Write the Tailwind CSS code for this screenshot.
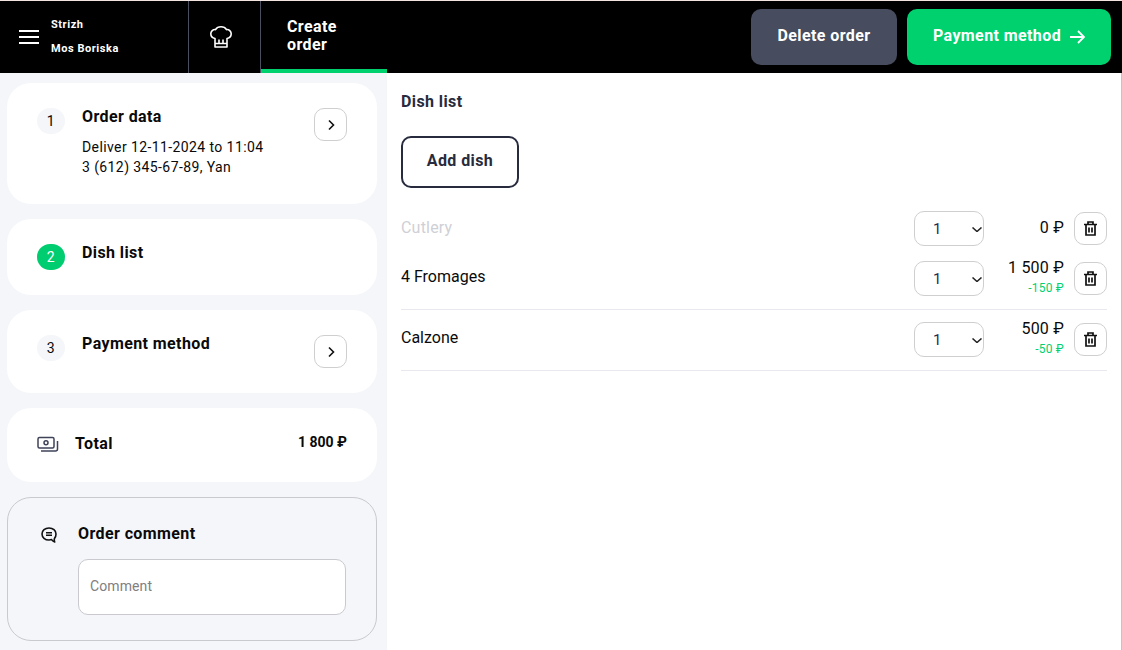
<!DOCTYPE html>
<html lang="en">
<head>
    <meta charset="UTF-8">
    <title>Create order</title>
    <script src="https://cdn.jsdelivr.net/npm/@tailwindcss/browser@4"></script>
</head>
<body class="h-[650px] overflow-hidden bg-white font-['Roboto',sans-serif] tracking-[0.4px] text-[#0a0a0a]">
    <div class="h-px bg-[#f3e4e0]"></div>
    <header class="flex h-[72px] items-stretch bg-black text-white">
        <div class="flex w-[189px] items-center border-r border-[#4a4e5e]">
            <svg class="ml-[19px] h-[16px] w-[20px]" viewBox="0 0 20 16" fill="none" stroke="white" stroke-width="2"><path d="M0 2h20M0 8h20M0 14h20"/></svg>
            <div class="ml-3 flex flex-col gap-[10px] text-[11px] leading-[14px] font-bold tracking-[0.55px]">
                <span>Strizh</span>
                <span>Mos Boriska</span>
            </div>
        </div>
        <div class="flex w-[72px] items-center justify-center border-r border-[#4a4e5e] pr-[7px]">
            <svg class="h-6 w-6" viewBox="0 0 24 24" fill="none" stroke="white" stroke-width="1.600" stroke-linejoin="round"><path d="M6 13.500C3.500 13 1.800 11 1.800 8.800 1.800 6.300 4 4.300 6.500 4.600 7.600 2.800 9.600 1.800 12 1.800s4.400 1 5.500 2.800c2.500-.3 4.700 1.700 4.700 4.200 0 2.200-1.700 4.200-4.200 4.700V22H6z"/><path d="M6 18.500h12M10 14.500v4M14 14.500v4"/></svg>
        </div>
        <div class="flex w-[126px] items-center border-b-4 border-[#00d16f] pt-[2px] pl-[26px] text-[16px] leading-[18px] font-bold">Create<br>order</div>
        <div class="ml-auto flex items-center gap-[10px] pr-[11px]">
            <button class="h-[56px] w-[146px] rounded-[10px] bg-[#474c5e] pb-[2px] text-[16px] font-bold text-white">Delete order</button>
            <button class="flex h-[56px] w-[204px] items-center justify-center gap-2 rounded-[10px] bg-[#00d16f] pb-[2px] text-[16px] font-bold text-white">
                Payment method
                <svg class="mt-[2px] h-4 w-4" viewBox="0 0 16 16" fill="none" stroke="white" stroke-width="1.800"><path d="M1 8h14M9 2l6 6-6 6"/></svg>
            </button>
        </div>
    </header>
    <main class="flex h-[577px]">
        <aside class="flex w-[387px] shrink-0 flex-col gap-[15px] bg-[#f5f6fa] pt-[10px] pr-[10px] pl-[7px]">
            <section class="relative h-[121px] rounded-[24px] bg-white pt-[25px] pl-[30px]">
                <div class="flex gap-[17px]">
                    <span class="flex h-[26px] w-[28px] items-center justify-center rounded-full bg-[#f5f6fa] text-[14px]">1</span>
                    <div class="-mt-px">
                        <h3 class="text-[16px] leading-[20px] font-bold">Order data</h3>
                        <p class="mt-[10px] text-[14px] leading-[20px]">Deliver 12-11-2024 to 11:04<br>3 (612) 345-67-89, Yan</p>
                    </div>
                </div>
                <button class="absolute top-[25px] right-[30px] flex h-[33px] w-[33px] items-center justify-center rounded-[10px] border border-[#cfcfcf]">
                    <svg class="h-3 w-3" viewBox="0 0 12 12" fill="none" stroke="#111" stroke-width="1.600"><path d="M4 1.500 8.500 6 4 10.500"/></svg>
                </button>
            </section>
            <section class="h-[76px] rounded-[24px] bg-white pt-[25px] pl-[30px]">
                <div class="flex gap-[17px]">
                    <span class="flex h-[26px] w-[28px] items-center justify-center rounded-full bg-[#00cc70] text-[14px] text-white">2</span>
                    <h3 class="-mt-px text-[16px] leading-[20px] font-bold">Dish list</h3>
                </div>
            </section>
            <section class="relative h-[83px] rounded-[24px] bg-white pt-[25px] pl-[30px]">
                <div class="flex gap-[17px]">
                    <span class="flex h-[26px] w-[28px] items-center justify-center rounded-full bg-[#f5f6fa] text-[14px]">3</span>
                    <h3 class="-mt-px text-[16px] leading-[20px] font-bold">Payment method</h3>
                </div>
                <button class="absolute top-[25px] right-[30px] flex h-[33px] w-[33px] items-center justify-center rounded-[10px] border border-[#cfcfcf]">
                    <svg class="h-3 w-3" viewBox="0 0 12 12" fill="none" stroke="#111" stroke-width="1.600"><path d="M4 1.500 8.500 6 4 10.500"/></svg>
                </button>
            </section>
            <section class="flex h-[74px] items-center rounded-[24px] bg-white px-[30px]">
                <svg class="h-[18px] w-[22px]" viewBox="0 0 22 18" fill="none" stroke="#3f4358" stroke-width="1.500"><rect x="1" y="1.500" width="16" height="10.500" rx="1.500"/><circle cx="9" cy="6.800" r="2"/><path d="M4 15h14.500a2 2 0 0 0 2-2V5"/></svg>
                <span class="mb-[2px] ml-4 text-[16px] font-bold">Total</span>
                <span class="mb-[5px] ml-auto text-[14px] font-bold tracking-normal">1 800 ₽</span>
            </section>
            <section class="flex h-[144px] rounded-[24px] border border-[#c9c9cf] pt-[26px] pl-[33px]">
                <svg class="mt-[3px] h-4 w-4" viewBox="0 0 16 16" fill="none" stroke="#111" stroke-width="1.600" stroke-linejoin="round"><path d="M8 1C4 1 1 3.600 1 7s3 6 7 6c.9 0 1.800-.1 2.600-.4.6 1 1.500 1.800 3.100 2.400-.5-1.200-.5-2.300-.3-3.400C14.400 10.500 15 8.800 15 7c0-3.400-3-6-7-6z"/><path d="M5 5.800h6M5 8.300h6"/></svg>
                <div class="ml-[21px]">
                    <h3 class="text-[16px] leading-[20px] font-bold">Order comment</h3>
                    <input class="mt-[15px] h-[56px] w-[268px] rounded-[10px] border border-[#c9c9cf] bg-white px-[11px] pb-[2px] text-[14px] tracking-[0.1px] outline-none placeholder:text-[#808080]" placeholder="Comment">
                </div>
            </section>
        </aside>
        <section class="flex-1 border-r border-[#c4c4c4] px-[14px] pt-[20px]">
            <h2 class="text-[16px] leading-[18px] font-bold text-[#272b3d]">Dish list</h2>
            <button class="mt-[25px] h-[52px] w-[118px] rounded-[10px] border-2 border-[#272b3d] pb-[2px] text-[16px] font-bold text-[#272b3d]">Add dish</button>
            <div class="mt-[23px] flex h-[35px] items-center tracking-[0.2px]">
                <span class="-mt-[2px] flex-1 text-[16px] text-[#cfd0d6]">Cutlery</span>
                <div class="relative">
                    <select class="block h-[35px] w-[70px] appearance-none rounded-[10px] border border-[#cfcfcf] bg-white pt-px pl-[18px] text-[15px] text-[#272b4d]"><option>1</option></select>
                    <svg class="pointer-events-none absolute top-[16px] right-[2px] h-[5px] w-[10px]" viewBox="0 0 10 5" fill="none" stroke="#222" stroke-width="1.500"><path d="M.5.500 5 4.500 9.500.500"/></svg>
                </div>
                <div class="-mt-[2px] w-[80px] text-right text-[16px]">0 ₽</div>
                <button class="ml-[10px] flex h-[33px] w-[33px] items-center justify-center rounded-[10px] border border-[#cfcfcf]">
                    <svg class="h-[15px] w-[13px]" viewBox="0 0 13 15" fill="none" stroke="#111" stroke-width="1.700"><path d="M0 3.500h13M4 3.500V1h5v2.500M2 3.500V14h9V3.500M5 6.500v5M8 6.500v5"/></svg>
                </button>
            </div>
            <div class="mt-[15px] flex h-[49px] items-start border-b border-[#e8e9ef] tracking-[0.2px]">
                <span class="flex-1 pt-[4px] text-[16px] tracking-normal">4 Fromages</span>
                <div class="relative">
                    <select class="block h-[35px] w-[70px] appearance-none rounded-[10px] border border-[#cfcfcf] bg-white pt-px pl-[18px] text-[15px] text-[#272b4d]"><option>1</option></select>
                    <svg class="pointer-events-none absolute top-[16px] right-[2px] h-[5px] w-[10px]" viewBox="0 0 10 5" fill="none" stroke="#222" stroke-width="1.500"><path d="M.5.500 5 4.500 9.500.500"/></svg>
                </div>
                <div class="-mt-[3px] w-[80px] text-right text-[16px] leading-[20px]">1 500 ₽<div class="mt-[3px] text-[12px] leading-[14px] text-[#00d16f]">-150 ₽</div></div>
                <button class="mt-px ml-[10px] flex h-[33px] w-[33px] items-center justify-center rounded-[10px] border border-[#cfcfcf]">
                    <svg class="h-[15px] w-[13px]" viewBox="0 0 13 15" fill="none" stroke="#111" stroke-width="1.700"><path d="M0 3.500h13M4 3.500V1h5v2.500M2 3.500V14h9V3.500M5 6.500v5M8 6.500v5"/></svg>
                </button>
            </div>
            <div class="flex h-[61px] items-start border-b border-[#e8e9ef] pt-[12px] tracking-[0.2px]">
                <span class="flex-1 pt-[4px] text-[16px] tracking-normal">Calzone</span>
                <div class="relative">
                    <select class="block h-[35px] w-[70px] appearance-none rounded-[10px] border border-[#cfcfcf] bg-white pt-px pl-[18px] text-[15px] text-[#272b4d]"><option>1</option></select>
                    <svg class="pointer-events-none absolute top-[16px] right-[2px] h-[5px] w-[10px]" viewBox="0 0 10 5" fill="none" stroke="#222" stroke-width="1.500"><path d="M.5.500 5 4.500 9.500.500"/></svg>
                </div>
                <div class="-mt-[3px] w-[80px] text-right text-[16px] leading-[20px]">500 ₽<div class="mt-[3px] text-[12px] leading-[14px] text-[#00d16f]">-50 ₽</div></div>
                <button class="mt-px ml-[10px] flex h-[33px] w-[33px] items-center justify-center rounded-[10px] border border-[#cfcfcf]">
                    <svg class="h-[15px] w-[13px]" viewBox="0 0 13 15" fill="none" stroke="#111" stroke-width="1.700"><path d="M0 3.500h13M4 3.500V1h5v2.500M2 3.500V14h9V3.500M5 6.500v5M8 6.500v5"/></svg>
                </button>
            </div>
        </section>
    </main>
</body>
</html>
